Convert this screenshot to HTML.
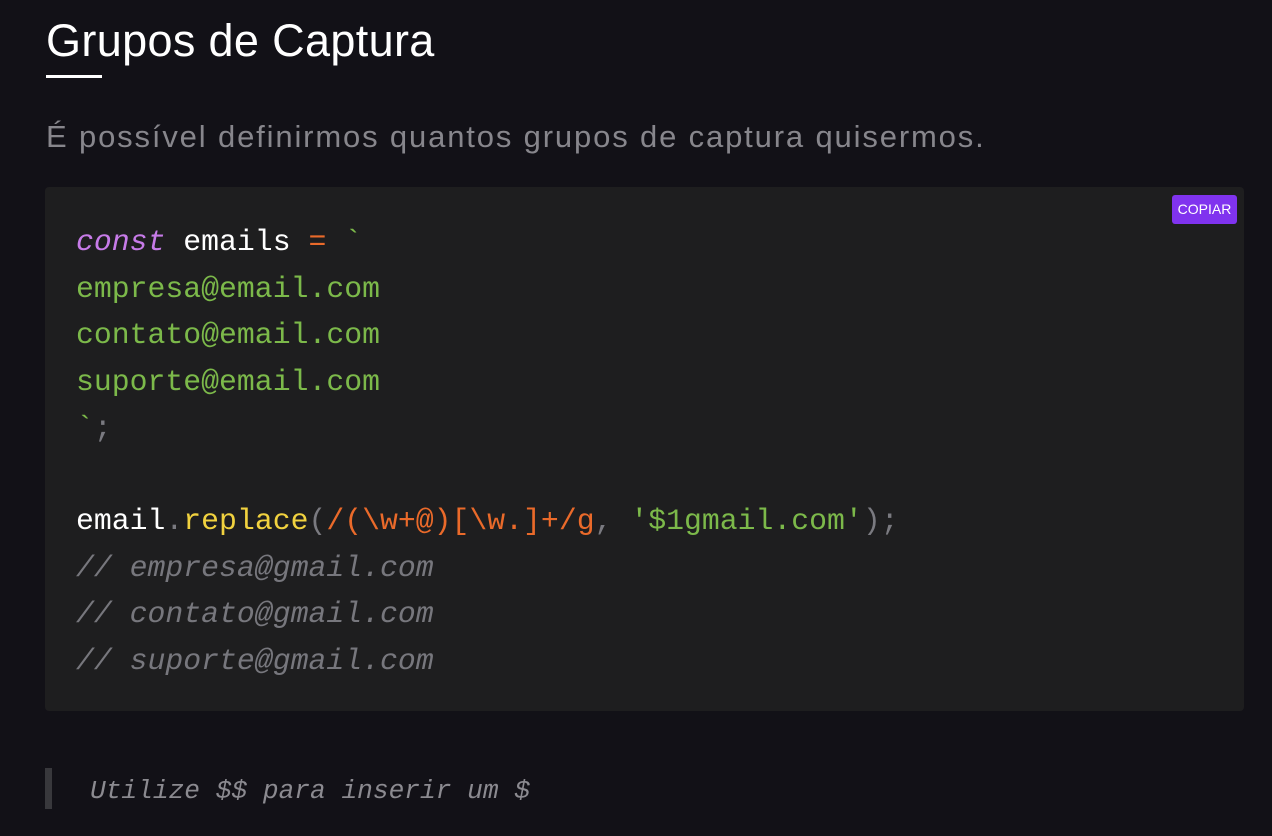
<!DOCTYPE html>
<html><head><meta charset="utf-8"><style>
html,body{margin:0;padding:0;background:#121117;width:1272px;height:836px;overflow:hidden;}
body{position:relative;font-family:"Liberation Sans",sans-serif;}
h1{position:absolute;left:46px;top:13px;margin:0;font-weight:400;font-size:45px;line-height:56px;color:#fff;letter-spacing:0.35px;}
.ul{position:absolute;left:46px;top:75px;width:56px;height:3px;background:#fff;}
p{position:absolute;left:46px;top:117px;margin:0;font-size:31px;line-height:40px;color:#87868c;white-space:nowrap;letter-spacing:1.85px;}
.code{position:absolute;left:45px;top:187px;width:1199px;height:524px;background:#1e1e1f;border-radius:4px;}
.btn{position:absolute;left:1172px;top:195px;width:65px;height:29px;background:#8033ef;border-radius:3px;color:#fff;font-size:14px;line-height:29px;text-align:center;}
pre{position:absolute;left:76px;top:219px;margin:0;font-family:"Liberation Mono",monospace;font-size:29.8px;line-height:46.5px;color:#fff;}
.k{color:#c77be8;font-style:italic}.o{color:#ea6a2a}.s{color:#7cb94a}.f{color:#f1d23f}.g{color:#7a7a80}.c{color:#77777d;font-style:italic}
.bq{position:absolute;left:45px;top:768px;width:7px;height:41px;background:#38383c;}
.bqt{position:absolute;left:90px;top:773px;font-family:"Liberation Mono",monospace;font-style:italic;font-size:26.2px;line-height:36px;color:#8b8a90;white-space:nowrap;}
</style></head><body>
<h1>Grupos de Captura</h1>
<div class="ul"></div>
<p>É possível definirmos quantos grupos de captura quisermos.</p>
<div class="code"></div>
<div class="btn">COPIAR</div>
<pre><span class="k">const</span> emails <span class="o">=</span> <span class="s">`</span>
<span class="s">empresa@email.com</span>
<span class="s">contato@email.com</span>
<span class="s">suporte@email.com</span>
<span class="s">`</span><span class="g">;</span>

email<span class="g">.</span><span class="f">replace</span><span class="g">(</span><span class="o">/(\w+@)[\w.]+/g</span><span class="g">,</span> <span class="s">'$1gmail.com'</span><span class="g">);</span>
<span class="c">// empresa@gmail.com</span>
<span class="c">// contato@gmail.com</span>
<span class="c">// suporte@gmail.com</span></pre>
<div class="bq"></div>
<div class="bqt">Utilize $$ para inserir um $</div>
</body></html>
